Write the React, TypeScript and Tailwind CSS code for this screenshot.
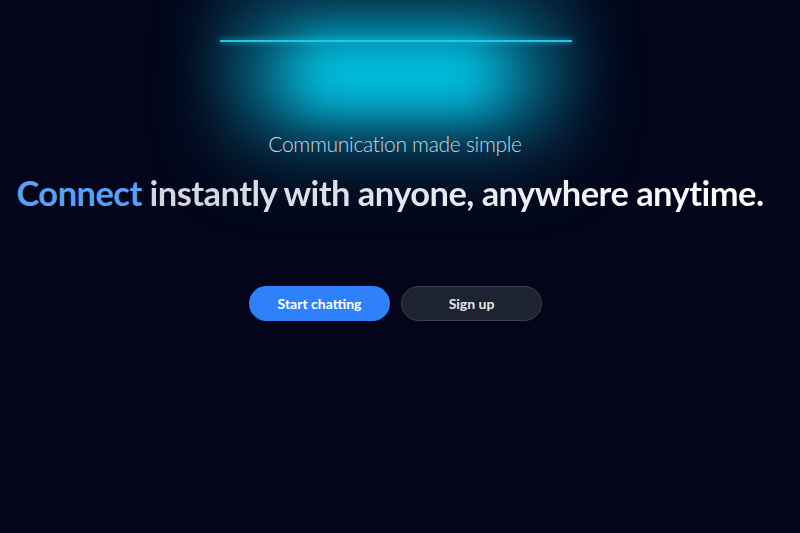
import React from "react";

export default function App() {
  return (
    <div
      className="relative w-full h-[533px] overflow-hidden bg-[#03061a]"
      style={{ fontFamily: 'Lato, "Open Sans", sans-serif' }}
    >
      {/* glow */}
      <div className="pointer-events-none absolute left-[220px] top-0 w-[352px] h-[200px]">
        <div className="absolute left-[10px] right-[10px] top-[-30px] h-[75px] bg-[#0a3a52] opacity-80 blur-2xl" />
        <div className="absolute left-[20px] right-[20px] top-[36px] h-[125px] bg-gradient-to-b from-[#00c2e0] via-[#0a8db0] to-transparent blur-2xl" />
        <div className="absolute left-[80px] right-[80px] top-[42px] h-[65px] bg-[#00c3e3] blur-xl" />
        <div className="absolute left-0 right-0 top-[40px] h-[2px] bg-[#1fc8e6] shadow-[0_0_6px_#1fc8e6]" />
      </div>

      <div className="relative flex flex-col items-center pt-[128px]">
        <p className="text-[21px] font-light text-[#cbd5e1] tracking-[-0.3px] pr-[10px]">Communication made simple</p>
        <h1 className="mt-[10px] text-[34.5px] font-bold tracking-[-0.55px] leading-[46px] pr-[20px]">
          <span className="text-[#5aa1f5]">Connect</span>{" "}
          <span className="bg-gradient-to-r from-[#cfd6e0] to-white bg-clip-text text-transparent">
            instantly with anyone, anywhere anytime.
          </span>
        </h1>
        <div className="mt-[70px] flex gap-[11px] pr-[9px]">
          <button className="w-[141px] h-[35px] rounded-full bg-[#2f80fb] text-white text-[14px] font-bold">
            Start chatting
          </button>
          <button className="w-[141px] h-[35px] rounded-full bg-[#1e2331] border border-[#3a4150] text-[#e5e7eb] text-[14px] font-bold">
            Sign up
          </button>
        </div>
      </div>
    </div>
  );
}
